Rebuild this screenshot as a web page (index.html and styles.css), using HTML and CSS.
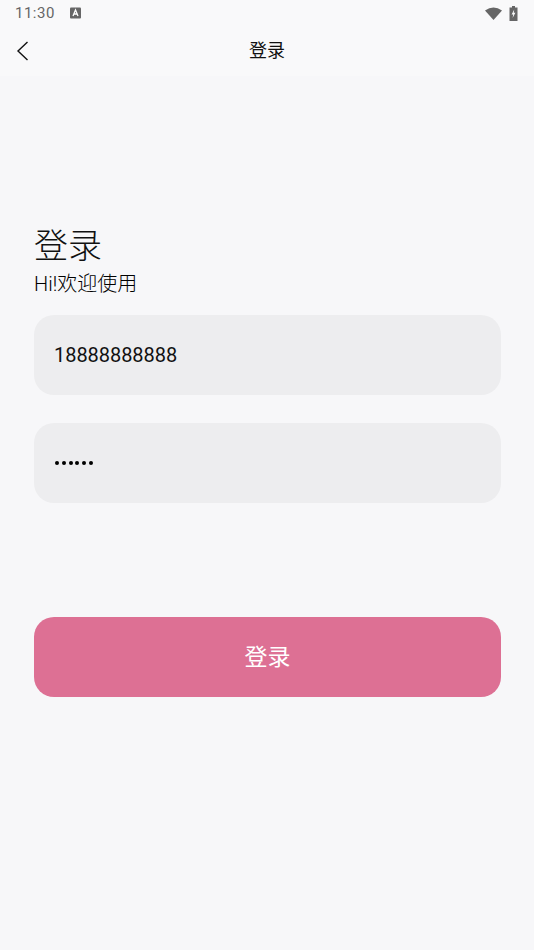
FILE: index.html
```html
<!DOCTYPE html>
<html lang="zh">
<head>
  <meta charset="utf-8">
  <title>登录</title>
  <link rel="stylesheet" href="styles.css">
</head>
<body>
  <div class="topArea">
    <div class="statusBar">
      <div class="statusLeft">
        <span class="time">11:30</span>
        <svg class="notice" width="11" height="12" viewBox="0 0 11 12">
          <rect x="0" y="0.5" width="11" height="11" rx="1" fill="#666"/>
          <path d="M3 9 L5.5 3 L8 9 M4 7 H7" fill="none" stroke="#fff" stroke-width="1.3"/>
        </svg>
      </div>
      <div class="statusRight">
        <svg width="17" height="13" viewBox="0 0 17 13">
          <path d="M0 3.5 Q8.5 -2.5 17 3.5 L8.5 13 Z" fill="#666"/>
        </svg>
        <svg width="9" height="15" viewBox="0 0 9 15">
          <path d="M3 0 H6 V1.5 H8.5 V15 H0.5 V1.5 H3 Z" fill="#666"/>
          <path d="M5.2 3.5 L2.6 8.5 H4.2 L3.6 12 L6.4 6.8 H4.8 Z" fill="#f9f9fa"/>
        </svg>
      </div>
    </div>

    <header class="navBar">
      <svg class="backIcon" width="14" height="22" viewBox="0 0 14 22">
        <path d="M11.5 2 L2 11 L11.5 20" fill="none" stroke="#111" stroke-width="1.4"/>
      </svg>
      <span class="navTitle">登录</span>
    </header>
  </div>

  <main class="content">
    <h1 class="title">登录</h1>
    <p class="subtitle">Hi!欢迎使用</p>
    <div class="field">18888888888</div>
    <div class="field passwordField">
      <span class="dot"></span><span class="dot"></span><span class="dot"></span><span class="dot"></span><span class="dot"></span><span class="dot"></span>
    </div>
    <button class="buttonLogin">登录</button>
  </main>
</body>
</html>
```

FILE: styles.css
```css
* {
  margin: 0;
  box-sizing: border-box;
  font-family: Roboto, "Noto Sans CJK SC", sans-serif;
}

body {
  height: 950px;
  overflow: hidden;
  background-color: #f7f7f9;
  color: #111;
}

.topArea {
  background-color: #f9f9fa;
}

.statusBar {
  height: 24px;
  padding: 2px 16px 0 15px;
  display: flex;
  justify-content: space-between;
  align-items: center;
}

.statusLeft {
  display: flex;
  align-items: center;
  gap: 15px;
}

.statusRight {
  display: flex;
  align-items: center;
  gap: 7px;
}

.time {
  font-size: 15px;
  color: #666;
  letter-spacing: 0.5px;
}

.navBar {
  height: 52px;
  padding-bottom: 2px;
  display: flex;
  align-items: center;
  justify-content: center;
  position: relative;
}

.backIcon {
  position: absolute;
  left: 16px;
  top: 16px;
}

.navTitle {
  font-size: 18px;
}

.content {
  padding: 148px 33px 0 34px;
}

.title {
  font-size: 34px;
  font-weight: 300;
  line-height: 44px;
}

.subtitle {
  font-size: 20px;
  font-weight: 300;
  line-height: 28px;
  margin-top: 2px;
  margin-bottom: 17px;
  color: #000;
}

.field {
  height: 80px;
  margin-bottom: 28px;
  padding-left: 20px;
  border-radius: 20px;
  background-color: #ededef;
  display: flex;
  align-items: center;
  font-size: 20px;
  letter-spacing: -0.05px;
}

.passwordField {
  gap: 2.8px;
  margin-bottom: 114px;
  padding-left: 21px;
  padding-bottom: 1px;
}

.dot {
  width: 4px;
  height: 4px;
  border-radius: 50%;
  background-color: #000;
}

.buttonLogin {
  width: 100%;
  height: 80px;
  padding-bottom: 6px;
  border: none;
  border-radius: 20px;
  background-color: #dd7094;
  color: white;
  font-size: 23px;
}
```
